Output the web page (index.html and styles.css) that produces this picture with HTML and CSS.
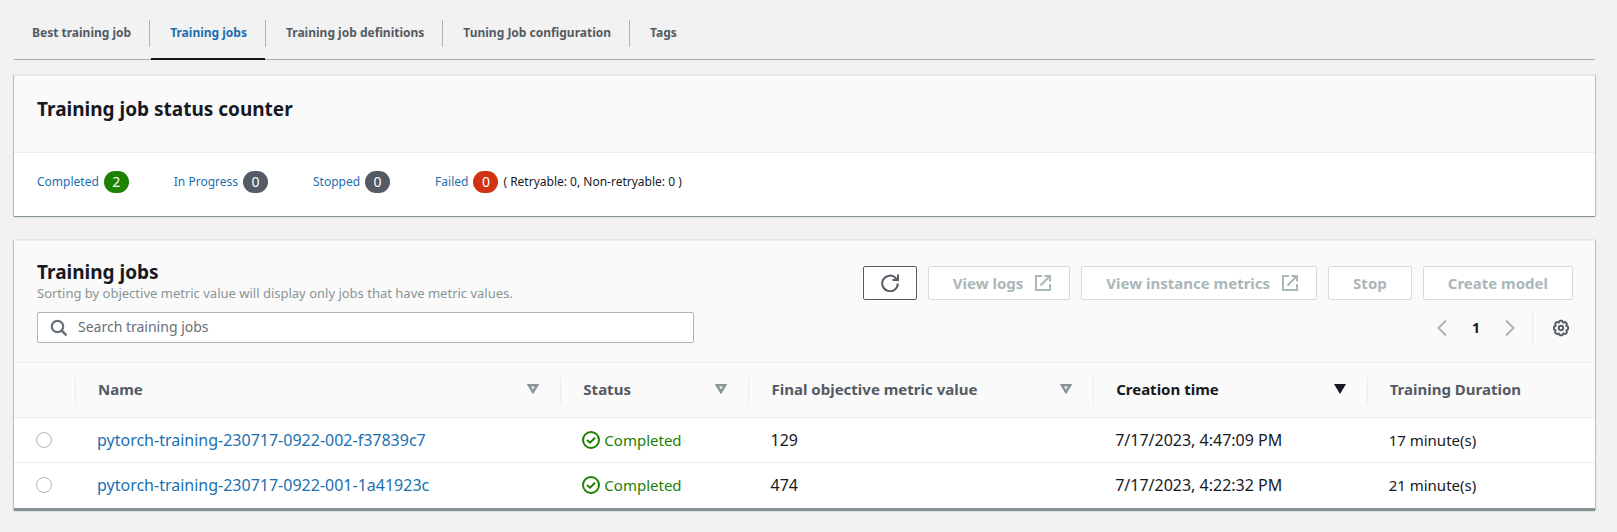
FILE: index.html
```html
<!DOCTYPE html>
<html lang="en">
<head>
<meta charset="utf-8">
<meta name="viewport" content="width=device-width, initial-scale=1">
<title>Training jobs</title>
<link rel="stylesheet" href="styles.css">
</head>
<body>
<svg class="sprite" aria-hidden="true">
  <symbol id="external" viewBox="0 0 16 16"><path d="M7 1H1v14h14V9M9.500 1H15v5.500M15 1 5.500 10.500" fill="none" stroke="currentColor" stroke-width="2"/></symbol>
  <symbol id="check" viewBox="0 0 18 18"><circle cx="9" cy="9" r="8" fill="none" stroke="currentColor" stroke-width="2"/><path d="m5 9 3 2.700 5-5" fill="none" stroke="currentColor" stroke-width="2"/></symbol>
  <symbol id="sort" viewBox="0 0 12 10"><path d="M1.800 1.200h8.400L6 8z" fill="none" stroke="currentColor" stroke-width="2.400"/></symbol>
</svg>
<main class="page">
  <nav class="tabs">
    <a class="tab" href="#best">Best training job</a>
    <a class="tab tab-active" href="#jobs" aria-current="page">Training jobs</a>
    <a class="tab" href="#definitions">Training job definitions</a>
    <a class="tab" href="#configuration">Tuning Job configuration</a>
    <a class="tab" href="#tags">Tags</a>
  </nav>

  <section class="panel">
    <header class="panel-header counter-header"><h2 class="title">Training job status counter</h2></header>
    <div class="counters">
      <div class="counter"><a href="#completed">Completed</a><span class="badge badge-green">2</span></div>
      <div class="counter"><a href="#progress">In Progress</a><span class="badge">0</span></div>
      <div class="counter"><a href="#stopped">Stopped</a><span class="badge">0</span></div>
      <div class="counter"><a href="#failed">Failed</a><span class="badge badge-red">0</span><span>( Retryable: 0, Non-retryable: 0 )</span></div>
    </div>
  </section>

  <section class="panel panel-jobs">
    <header class="panel-header jobs-header">
      <div class="jobs-heading">
        <h2 class="title">Training jobs</h2>
        <p class="description">Sorting by objective metric value will display only jobs that have metric values.</p>
        <label class="search">
          <svg class="search-icon" viewBox="0 0 18 18" aria-hidden="true"><circle cx="7.500" cy="7.500" r="5.700" fill="none" stroke="currentColor" stroke-width="2.200"/><path d="m11.500 11.500 5 4.800" stroke="currentColor" stroke-width="2.500"/></svg>
          <input class="search-input" type="search" placeholder="Search training jobs" aria-label="Search training jobs">
        </label>
      </div>
      <div class="jobs-tools">
        <div class="actions">
          <button class="button button-refresh" type="button" aria-label="Refresh"><svg class="icon-refresh" viewBox="0 0 18 18" aria-hidden="true"><path d="M16.800 9.500A7.800 7.800 0 1 1 14.800 4.200L16.500 6" fill="none" stroke="currentColor" stroke-width="2"/><path d="M17 .5V6H11.500" fill="none" stroke="currentColor" stroke-width="2"/></svg></button>
          <button class="button" type="button" disabled>View logs<svg class="icon-external" aria-hidden="true"><use href="#external"/></svg></button>
          <button class="button" type="button" disabled>View instance metrics<svg class="icon-external" aria-hidden="true"><use href="#external"/></svg></button>
          <button class="button" type="button" disabled>Stop</button>
          <button class="button" type="button" disabled>Create model</button>
        </div>
        <div class="pagination">
          <button class="page-button" type="button" aria-label="Previous page" disabled><svg class="icon-chevron" viewBox="0 0 10 18" aria-hidden="true"><path d="M9 1.500 1.500 9 9 16.500" fill="none" stroke="currentColor" stroke-width="2"/></svg></button>
          <button class="page-button page-current" type="button" aria-current="page">1</button>
          <button class="page-button" type="button" aria-label="Next page" disabled><svg class="icon-chevron" viewBox="0 0 10 18" aria-hidden="true"><path d="m1 1.500 7.500 7.500L1 16.500" fill="none" stroke="currentColor" stroke-width="2"/></svg></button>
          <button class="settings" type="button" aria-label="Preferences"><svg class="icon-gear" viewBox="0 0 18 18" aria-hidden="true"><path d="M7.700 1h2.600l.9 1.900 2-.7 1.800 1.800-.7 2 1.700.9v2.800l-1.700.8.7 2-1.800 1.800-2-.7-.9 1.900H7.700l-.9-1.900-2 .7L3 12.500l.7-2L2 9.700V6.900L3.700 6 3 4l1.800-1.800 2 .7z" transform="translate(0 .8)" fill="none" stroke="currentColor" stroke-width="1.900" stroke-linejoin="round"/><circle cx="9" cy="9" r="2.200" fill="none" stroke="currentColor" stroke-width="1.900"/></svg></button>
        </div>
      </div>
    </header>
    <table class="jobs">
      <colgroup><col class="col-select"><col class="col-name"><col class="col-status"><col class="col-metric"><col class="col-created"><col></colgroup>
      <thead>
        <tr>
          <th aria-label="Select"></th>
          <th><div class="head">Name<svg class="icon-sort" aria-hidden="true"><use href="#sort"/></svg></div></th>
          <th><div class="head">Status<svg class="icon-sort" aria-hidden="true"><use href="#sort"/></svg></div></th>
          <th><div class="head">Final objective metric value<svg class="icon-sort" aria-hidden="true"><use href="#sort"/></svg></div></th>
          <th aria-sort="descending"><div class="head head-sorted">Creation time<svg class="icon-sort" viewBox="0 0 12 10" aria-hidden="true"><path d="M0 0h12L6 10z" fill="currentColor"/></svg></div></th>
          <th><div class="head">Training Duration</div></th>
        </tr>
      </thead>
      <tbody>
        <tr>
          <td><input class="radio" type="radio" name="job" aria-label="Select pytorch-training-230717-0922-002-f37839c7"></td>
          <td class="cell-large"><a href="#job-002">pytorch-training-230717-0922-002-f37839c7</a></td>
          <td><span class="status"><svg class="icon-check" aria-hidden="true"><use href="#check"/></svg>Completed</span></td>
          <td class="cell-large">129</td><td class="cell-large">7/17/2023, 4:47:09 PM</td><td>17 minute(s)</td>
        </tr>
        <tr>
          <td><input class="radio" type="radio" name="job" aria-label="Select pytorch-training-230717-0922-001-1a41923c"></td>
          <td class="cell-large"><a href="#job-001">pytorch-training-230717-0922-001-1a41923c</a></td>
          <td><span class="status"><svg class="icon-check" aria-hidden="true"><use href="#check"/></svg>Completed</span></td>
          <td class="cell-large">474</td><td class="cell-large">7/17/2023, 4:22:32 PM</td><td>21 minute(s)</td>
        </tr>
      </tbody>
    </table>
  </section>
</main>
</body>
</html>
```
FILE: styles.css
```css
* { box-sizing: border-box; }
body {
  margin: 0;
  background: #f2f2f2;
  color: #16191f;
  font: 15px/22px "Noto Sans", "Open Sans", sans-serif;
}
a { color: #1a6fb0; text-decoration: none; }
button, input { font: inherit; }
.sprite { display: none; }
.page { padding: 6px 22px 22px 14px; }

.tabs {
  display: flex;
  border-bottom: 1px solid #a3adad;
  margin-bottom: 15px;
}
.tab {
  position: relative;
  padding: 16px 18px 15px;
  margin-right: 1px;
  border-right: 1px solid transparent;
  color: #545b64;
  font-size: 12px;
  font-weight: 700;
  white-space: nowrap;
}
.tab + .tab { padding-left: 19px; }
.tab:not(:last-child)::after {
  content: "";
  position: absolute;
  right: -1px;
  top: 14px;
  height: 27px;
  border-right: 1px solid #aab7b8;
}
.tab-active { color: #1a6fb0; }
.tab-active::before {
  content: "";
  position: absolute;
  left: 0;
  right: 0;
  bottom: -1px;
  height: 2px;
  background: #16191f;
}

.panel {
  background: #fff;
  border-top: 1px solid #eaeded;
  box-shadow: 0 1px 1px #879596, 1px 0 1px #c4caca, -1px 0 1px #c4caca;
  margin-bottom: 24px;
}
.panel-jobs { border-bottom: 2px solid #879196; margin-bottom: 0; }
.panel-header { background: #fafafa; border-bottom: 1px solid #eaeded; }
.title { margin: 0; font-size: 19px; line-height: 24px; font-weight: 700; }
.counter-header { padding: 21px 23px 31px; }
.counters { display: flex; gap: 45px; padding: 18px 23px 23px; font-size: 12px; }
.counter { display: flex; align-items: center; gap: 5px; white-space: nowrap; }
.badge {
  width: 25px;
  border-radius: 11px;
  background: #545b64;
  color: #fff;
  font-size: 14px;
  text-align: center;
}
.badge-green { background: #1d8102; }
.badge-red { background: #d13212; }

.jobs-header { display: flex; justify-content: space-between; padding: 19px 22px 18px 23px; }
.jobs-heading { flex: 0 1 657px; }
.description { margin: 0 0 10px; color: #879596; font-size: 13px; line-height: 18px; }
.search {
  display: flex;
  align-items: center;
  height: 31px;
  padding: 0 12px;
  gap: 10px;
  border: 1px solid #aab7b8;
  border-radius: 2px;
  background: #fff;
}
.search-icon { width: 18px; height: 18px; color: #687078; flex: none; }
.search-input { flex: 1; min-width: 0; padding: 0 0 2px; border: 0; outline: 0; background: none; font-size: 14px; }
.search-input::placeholder { color: #687078; opacity: 1; }
.jobs-tools { display: flex; flex-direction: column; gap: 12px; align-items: flex-end; padding-top: 6px; }
.actions { display: flex; gap: 11px; }
.button {
  display: flex;
  align-items: center;
  gap: 12px;
  height: 34px;
  padding: 0 24px;
  border: 1px solid #d5dbdb;
  border-radius: 2px;
  background: #fff;
  color: #aab7b8;
  font-weight: 700;
  white-space: nowrap;
}
.button:has(.icon-external) { padding-right: 18px; }
.button-refresh { padding: 0 17px; border-color: #545b64; color: #545b64; }
.icon-refresh, .icon-check { width: 18px; height: 18px; flex: none; }
.icon-external { width: 16px; height: 16px; flex: none; }
.pagination { display: flex; align-items: center; }
.page-button {
  display: grid;
  place-items: center;
  width: 34px;
  height: 32px;
  padding: 0;
  border: 0;
  background: none;
  color: #aab7b8;
}
.page-current { color: #16191f; font-size: 14px; font-weight: 700; }
.icon-chevron { width: 10px; height: 18px; }
.settings {
  display: flex;
  align-items: center;
  height: 32px;
  margin-left: 5px;
  padding: 0 3px 0 19px;
  border: 0;
  border-left: 1px solid #eaeded;
  background: none;
  color: #545b64;
}
.icon-gear { width: 18px; height: 18px; }

.jobs { width: 100%; border-collapse: collapse; table-layout: fixed; }
.col-select { width: 61px; }
.col-name { width: 30.7%; }
.col-status { width: 11.9%; }
.col-metric { width: 21.8%; }
.col-created { width: 17.3%; }
.jobs th { padding: 14px 0 13px; background: #fafafa; border-bottom: 1px solid #eaeded; text-align: left; }
.head {
  display: flex;
  align-items: center;
  justify-content: space-between;
  height: 27px;
  padding: 0 21px 3px 22px;
  border-left: 1px solid #eaeded;
  color: #545b64;
  font-weight: 700;
  white-space: nowrap;
}
.head-sorted { color: #16191f; }
.icon-sort { width: 12px; height: 10px; color: #879596; flex: none; }
.head-sorted .icon-sort { color: #16191f; }
.jobs td { height: 45px; padding: 0 22px; white-space: nowrap; }
.jobs .cell-large { font-size: 16px; }
.jobs tbody tr + tr td { border-top: 1px solid #eaeded; }
.radio {
  display: block;
  appearance: none;
  width: 16px;
  height: 16px;
  margin: 0;
  border: 1px solid #aab7b8;
  border-radius: 50%;
  background: #fff;
}
.radio:checked { border: 5px solid #1a6fb0; }
.status { display: flex; align-items: center; gap: 4px; color: #1d8102; }
```
